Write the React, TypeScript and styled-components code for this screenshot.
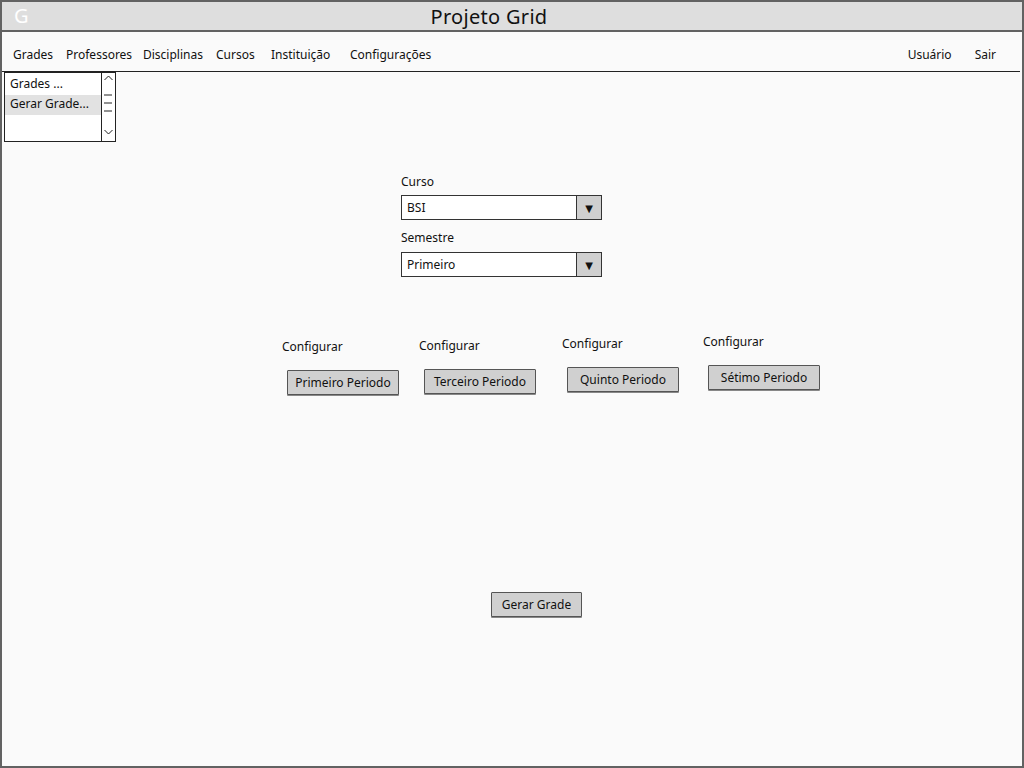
import React from 'react';
import styled, { createGlobalStyle } from 'styled-components';

const GlobalStyle = createGlobalStyle`
  html, body {
    margin: 0;
    padding: 0;
    background: #fafafa;
  }
  * {
    box-sizing: border-box;
  }
`;

const font = `"Comic Sans MS", "Noto Sans", "DejaVu Sans", sans-serif`;

const Frame = styled.div`
  width: 1024px;
  height: 768px;
  border: 2px solid #626262;
  background: #fafafa;
  font-family: ${font};
  color: #111;
  overflow: hidden;
`;

const TitleBar = styled.div`
  position: relative;
  height: 30px;
  background: #dedede;
  border-bottom: 2px solid #626262;
  display: flex;
  align-items: center;
  justify-content: center;
  padding-right: 46px;
`;

const Logo = styled.span`
  position: absolute;
  left: 12px;
  top: 0px;
  font-size: 20px;
  color: #fff;
  line-height: 28px;
`;

const Title = styled.h1`
  margin: 0;
  font-size: 20px;
  font-weight: normal;
  letter-spacing: 0.3px;
`;

const MenuBar = styled.nav`
  height: 40px;
  margin-right: 2px;
  border-bottom: 1px solid #222;
  display: flex;
  align-items: center;
  padding-top: 5px;
  padding-left: 11px;
  padding-right: 24px;
  font-size: 12px;
`;

const MenuItem = styled.span<{ $w?: number }>`
  width: ${(p) => (p.$w ? `${p.$w}px` : 'auto')};
  white-space: nowrap;
`;

const Spacer = styled.div`
  flex: 1;
`;

const ListBox = styled.div`
  margin-left: 2px;
  width: 112px;
  height: 70px;
  border: 1px solid #222;
  background: #fff;
  display: flex;
`;

const ListItems = styled.div`
  flex: 1;
  padding-top: 2px;
  font-size: 12px;
`;

const ListItem = styled.div<{ $selected?: boolean }>`
  height: 20px;
  line-height: 18px;
  padding-left: 5px;
  background: ${(p) => (p.$selected ? '#e2e2e2' : 'transparent')};
  white-space: nowrap;
`;

const ScrollBar = styled.div`
  width: 14px;
  border-left: 1px solid #222;
`;

const FormBlock = styled.div`
  margin-left: 399px;
  margin-top: 32px;
  width: 201px;
`;

const FieldLabel = styled.div<{ $top?: number }>`
  font-size: 12px;
  line-height: 16px;
  margin-top: ${(p) => p.$top ?? 0}px;
`;

const Select = styled.div<{ $top: number }>`
  margin-top: ${(p) => p.$top}px;
  height: 25px;
  border: 1px solid #333;
  background: #fff;
  display: flex;
  font-size: 12px;
`;

const SelectValue = styled.div`
  flex: 1;
  padding-left: 5px;
  line-height: 23px;
`;

const SelectArrow = styled.div`
  width: 25px;
  background: #cfcfcf;
  border-left: 1px solid #333;
  display: flex;
  align-items: center;
  justify-content: center;
  font-size: 10px;
`;

const PeriodRow = styled.div`
  margin-top: 57px;
  margin-left: 280px;
  display: grid;
  grid-template-columns: 137px 143px 141px auto;
  align-items: start;
`;

const PeriodGroup = styled.div<{ $offset: number }>`
  margin-top: ${(p) => p.$offset}px;
`;

const Button = styled.button<{ $w: number }>`
  display: block;
  width: ${(p) => p.$w}px;
  height: 25px;
  padding: 0;
  background: #d0d0d0;
  border: 1px solid #555;
  border-radius: 1px;
  box-shadow: 0 1px 0 #888;
  font-family: ${font};
  font-size: 12px;
  color: #111;
`;

const PeriodButton = styled(Button)`
  margin-top: 15px;
  margin-left: 5px;
`;

const GenerateButton = styled(Button)`
  margin-top: 197px;
  margin-left: 489px;
`;

const Scroll = () => (
  <svg width="13" height="68" viewBox="0 0 13 68">
    <path d="M2.5 7 L6.5 3 L10.5 7" fill="none" stroke="#222" strokeWidth="1" />
    <path d="M2 22 H10 M2 30 H10 M2 38 H10" stroke="#222" strokeWidth="1" />
    <path d="M2.5 57 L6.5 61 L10.5 57" fill="none" stroke="#222" strokeWidth="1" />
  </svg>
);

const periods = [
  { name: 'Primeiro Periodo', offset: 5 },
  { name: 'Terceiro Periodo', offset: 4 },
  { name: 'Quinto Periodo', offset: 2 },
  { name: 'Sétimo Periodo', offset: 0 },
];

export default function App() {
  return (
    <>
      <GlobalStyle />
      <Frame>
        <TitleBar>
          <Logo>G</Logo>
          <Title>Projeto Grid</Title>
        </TitleBar>
        <MenuBar>
          <MenuItem $w={53}>Grades</MenuItem>
          <MenuItem $w={77}>Professores</MenuItem>
          <MenuItem $w={73}>Disciplinas</MenuItem>
          <MenuItem $w={55}>Cursos</MenuItem>
          <MenuItem $w={79}>Instituição</MenuItem>
          <MenuItem>Configurações</MenuItem>
          <Spacer />
          <MenuItem $w={67}>Usuário</MenuItem>
          <MenuItem>Sair</MenuItem>
        </MenuBar>
        <ListBox>
          <ListItems>
            <ListItem>Grades ...</ListItem>
            <ListItem $selected>Gerar Grade...</ListItem>
          </ListItems>
          <ScrollBar>
            <Scroll />
          </ScrollBar>
        </ListBox>
        <FormBlock>
          <FieldLabel>Curso</FieldLabel>
          <Select $top={5}>
            <SelectValue>BSI</SelectValue>
            <SelectArrow>▼</SelectArrow>
          </Select>
          <FieldLabel $top={10}>Semestre</FieldLabel>
          <Select $top={6}>
            <SelectValue>Primeiro</SelectValue>
            <SelectArrow>▼</SelectArrow>
          </Select>
        </FormBlock>
        <PeriodRow>
          {periods.map((p) => (
            <PeriodGroup key={p.name} $offset={p.offset}>
              <FieldLabel>Configurar</FieldLabel>
              <PeriodButton $w={112}>{p.name}</PeriodButton>
            </PeriodGroup>
          ))}
        </PeriodRow>
        <GenerateButton $w={91}>Gerar Grade</GenerateButton>
      </Frame>
    </>
  );
}
